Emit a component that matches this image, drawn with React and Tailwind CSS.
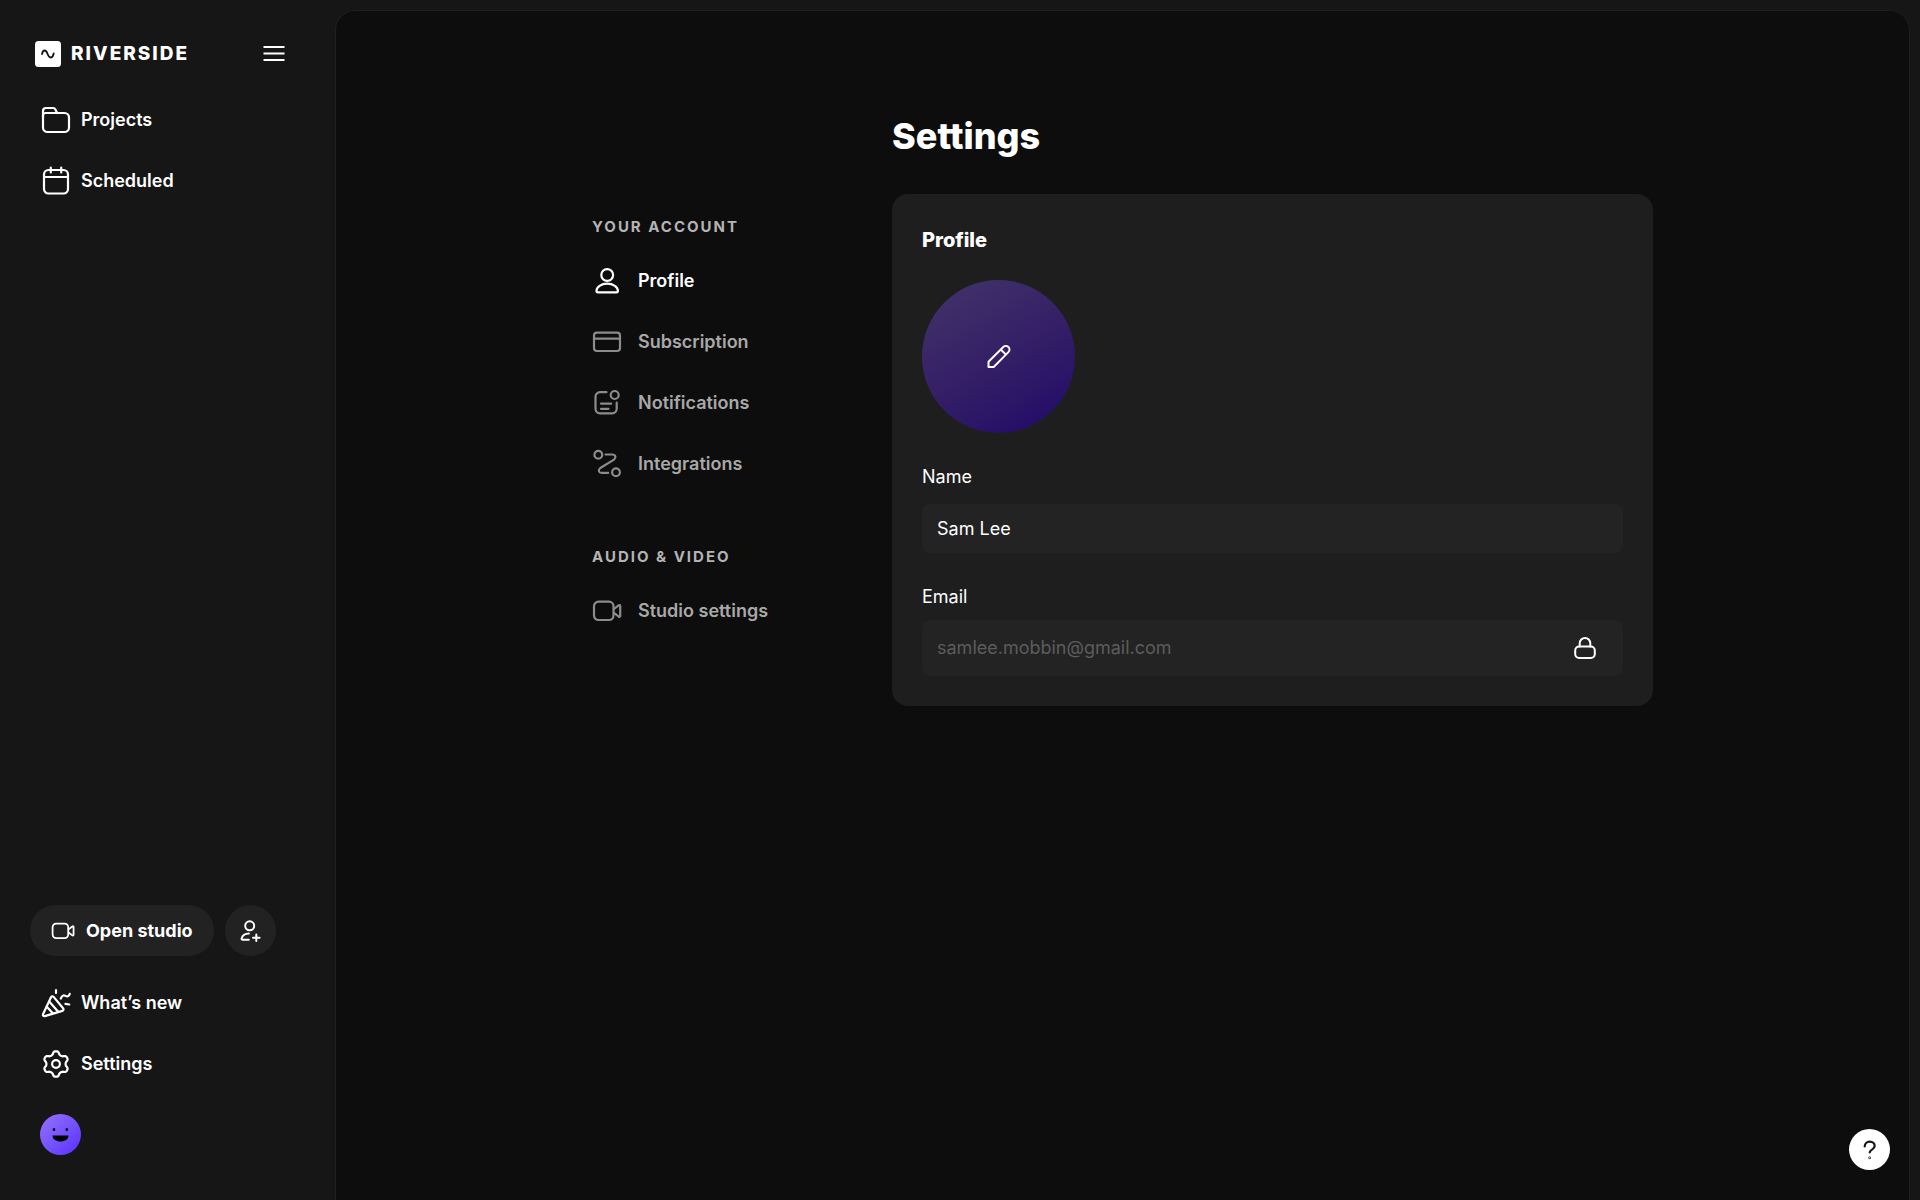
const Icon = ({ size = 'size-[30px]', box = 30, stroke = 2.2, children }) => (
  <svg
    viewBox={`0 0 ${box} ${box}`}
    className={`${size} shrink-0`}
    fill="none"
    stroke="currentColor"
    strokeWidth={stroke}
    strokeLinecap="round"
    strokeLinejoin="round"
    aria-hidden="true"
  >
    {children}
  </svg>
);

// Six soft teeth, one of them pointing straight up
const gearPath = (() => {
  const points = [];
  for (let deg = 0; deg < 360; deg += 4) {
    const a = (deg * Math.PI) / 180;
    const wave = Math.cos(6 * a);
    const r = 11.2 + 1.7 * Math.tanh(1.6 * wave);
    points.push(`${(15 + r * Math.sin(a)).toFixed(2)} ${(15 - r * Math.cos(a)).toFixed(2)}`);
  }
  return `M${points.join('L')}Z`;
})();

const FolderIcon = () => (
  <Icon>
    <path d="M2 12V6a3 3 0 0 1 3-3h7.2a2.5 2.5 0 0 1 2.2 1.400L16.200 8" />
    <path d="M2 11.500V22.500A4.500 4.500 0 0 0 6.500 27h17a4.500 4.500 0 0 0 4.500-4.500v-10A4.500 4.500 0 0 0 23.500 8H4.500C3 8 2 9 2 10.500Z" />
  </Icon>
);

const CalendarIcon = () => (
  <Icon>
    <rect x="3" y="4" width="24" height="23.500" rx="4.500" />
    <path d="M3 11h24M9.800 1.500v5M20.200 1.500v5" />
  </Icon>
);

const CameraIcon = ({ size }) => (
  <Icon size={size}>
    <rect x="2" y="5.700" width="19.500" height="18.300" rx="4.500" />
    <path d="M22 13l4.600-3.700c.8-.6 1.600-.2 1.600.8v9.600c0 1-.8 1.400-1.600.8L22 16.800" />
  </Icon>
);

const PersonIcon = () => (
  <Icon>
    <circle cx="15.200" cy="9" r="5.900" />
    <path d="M4.500 24.800c0-3.600 4.600-7.100 10.700-7.100s10.700 3.500 10.700 7.100c0 .9-.6 1.500-1.500 1.500H6c-.9 0-1.500-.6-1.500-1.500Z" />
  </Icon>
);

const CreditCardIcon = () => (
  <Icon>
    <rect x="2" y="5.700" width="26" height="18.300" rx="3" />
    <path d="M2 11.700h26" />
  </Icon>
);

const NotificationsIcon = () => (
  <Icon>
    <circle cx="22.700" cy="7" r="4" />
    <path d="M14.500 4.200H8A4.500 4.500 0 0 0 3.500 8.700v12.100a4.500 4.500 0 0 0 4.500 4.500h12.200a4.500 4.500 0 0 0 4.500-4.500v-6.300M9 15.600h10.200M9 20.800h7.500" />
  </Icon>
);

const IntegrationsIcon = () => (
  <Icon>
    <circle cx="6.300" cy="5.700" r="3.900" />
    <circle cx="24" cy="23.300" r="3.900" />
    <path d="M13.500 5.500h6.800c3.300 0 4.200 3.200 1.700 5.100L8.300 19c-2.600 2-1.700 4.900 1.500 4.900h6.400" />
  </Icon>
);

const PartyIcon = () => (
  <Icon>
    <path d="M10 9.200 2 26.300c-.5 1.200.5 2.200 1.800 1.800l17.500-5.200c1.300-.4 1.600-1.800.6-2.900L12.600 8.900c-.9-1-2.100-.8-2.600.3Z" />
    <path d="M8.200 13.500l9 10.200M5.800 18.800l6 6.400M15 2V5M19.800 10.500c1.500-4 3.500-3.300 4.700-2.600 1.700 1 3.500.8 4.200-2M24.500 15.900l3.700.6" />
  </Icon>
);

const GearIcon = () => (
  <Icon>
    <path d={gearPath} />
    <circle cx="15" cy="15" r="3.900" />
  </Icon>
);

const InviteIcon = () => (
  <Icon size="size-6" box={24} stroke={2}>
    <circle cx="11.700" cy="6.800" r="4.500" />
    <path d="M10.800 14.600c-4 .2-6.300 2.200-7.100 4.600-.3 1 .2 1.500 1.100 1.500h6M18.300 15.500v6.600M15 18.800h6.600" />
  </Icon>
);

const PencilIcon = () => (
  <Icon size="size-6" box={24} stroke={2}>
    <path d="M1.500 22v-5.200L16.300 2a3.600 3.600 0 0 1 5.100 5.100L6.700 22ZM13.800 4.500l5.100 5.100" />
  </Icon>
);

const LockIcon = () => (
  <Icon size="size-6" box={24} stroke={2}>
    <rect x="2.200" y="10.500" width="19.600" height="11.500" rx="4" />
    <path d="M6.700 10.500V7.300a5.300 5.300 0 0 1 10.600 0v3.200" />
  </Icon>
);

const mainLinks = [
  { label: 'Projects', icon: FolderIcon },
  { label: 'Scheduled', icon: CalendarIcon },
];

const footerLinks = [
  { label: 'What’s new', icon: PartyIcon },
  { label: 'Settings', icon: GearIcon },
];

const settingsGroups = [
  {
    title: 'YOUR ACCOUNT',
    links: [
      { label: 'Profile', icon: PersonIcon, active: true },
      { label: 'Subscription', icon: CreditCardIcon },
      { label: 'Notifications', icon: NotificationsIcon },
      { label: 'Integrations', icon: IntegrationsIcon },
    ],
  },
  {
    title: 'AUDIO & VIDEO',
    links: [{ label: 'Studio settings', icon: CameraIcon }],
  },
];

const SidebarLink = ({ label, icon: LinkIcon }) => (
  <a href="#" className="flex h-[61px] items-center gap-[10px] pl-[11px] text-lg font-semibold">
    <LinkIcon />
    {label}
  </a>
);

const Logo = () => (
  <a href="#" className="flex items-center gap-[10px]">
    <svg viewBox="0 0 26 26" className="size-[26px]" aria-hidden="true">
      <rect width="26" height="26" rx="3.500" fill="#fff" />
      <path
        d="M7 13.200c.4-2.300 1.400-3.700 2.700-3.700 3.300 0 2.500 7 5.900 7 1.500 0 2.600-1.500 3.100-4"
        fill="none"
        stroke="#161616"
        strokeWidth="1.800"
        strokeLinecap="round"
      />
    </svg>
    <span className="text-[19px] leading-6 font-extrabold tracking-[2px]">RIVERSIDE</span>
  </a>
);

const Sidebar = () => (
  <aside className="flex w-[335px] shrink-0 flex-col pt-6 pr-12 pb-[45px] pl-[30px]">
    <div className="mb-[5px] flex h-[60px] items-center justify-between pl-[5px]">
      <Logo />
      <button type="button" aria-label="Toggle menu" className="flex size-[26px] items-center justify-center">
        <svg viewBox="0 0 22 16" className="h-4 w-[22px]" stroke="currentColor" strokeWidth="2" aria-hidden="true">
          <path d="M.5 1h21M.5 7.500h21M.5 14h21" />
        </svg>
      </button>
    </div>
    <nav>
      {mainLinks.map(link => (
        <SidebarLink key={link.label} {...link} />
      ))}
    </nav>

    <div className="mt-auto">
      <div className="mb-4 flex gap-[11px]">
        <button
          type="button"
          className="flex h-[51px] items-center gap-[11px] rounded-full bg-[#222] px-[21px] text-lg font-bold"
        >
          <CameraIcon size="size-6" />
          Open studio
        </button>
        <button
          type="button"
          aria-label="Invite people"
          className="flex size-[51px] items-center justify-center rounded-full bg-[#222]"
        >
          <InviteIcon />
        </button>
      </div>
      {footerLinks.map(link => (
        <SidebarLink key={link.label} {...link} />
      ))}
      <button
        type="button"
        aria-label="Account"
        className="mt-5 ml-[10px] block size-[41px] rounded-full bg-linear-to-br from-[#9671ff] to-[#5a26ff]"
      >
        <svg viewBox="0 0 41 41" className="size-full" aria-hidden="true">
          <ellipse cx="14" cy="15.500" rx="1.300" ry="1.600" />
          <ellipse cx="26.800" cy="15.500" rx="1.300" ry="1.600" />
          <path d="M12.500 21.500h16c0 3.800-3.500 6-8 6s-8-2.200-8-6Z" />
        </svg>
      </button>
    </div>
  </aside>
);

const SettingsNav = () => (
  <nav className="flex w-[300px] shrink-0 flex-col gap-[51px] pt-[105px]">
    {settingsGroups.map(group => (
      <div key={group.title}>
        <h2 className="mb-[11px] text-[15px] leading-6 font-bold tracking-[2px] text-[#b4b4b4]">{group.title}</h2>
        {group.links.map(({ label, icon: LinkIcon, active }) => (
          <a
            key={label}
            href="#"
            className={`flex h-[61px] items-center gap-4 text-lg font-semibold ${active ? 'text-white' : 'text-[#a8a8a8]'}`}
          >
            <span className={active ? 'text-white' : 'text-[#8c8c8c]'}>
              <LinkIcon />
            </span>
            {label}
          </a>
        ))}
      </div>
    ))}
  </nav>
);

const ProfileCard = () => (
  <section className="rounded-2xl bg-[#1e1e1e] px-[30px] py-[30px]">
    <h2 className="text-xl leading-8 font-extrabold">Profile</h2>
    <button
      type="button"
      aria-label="Edit picture"
      className="mt-6 flex size-[153px] items-center justify-center rounded-full bg-linear-150 from-[#3f3069] from-10% via-[#351f66] to-[#260f68] to-85%"
    >
      <PencilIcon />
    </button>
    <label htmlFor="name" className="mt-8 block text-lg leading-6">
      Name
    </label>
    <input
      id="name"
      type="text"
      defaultValue="Sam Lee"
      className="mt-[15px] block h-[49px] w-full rounded-lg bg-[#232323] px-[15px] text-lg outline-none"
    />
    <label htmlFor="email" className="mt-8 block text-lg leading-6">
      Email
    </label>
    <div className="mt-[11px] flex h-14 items-center rounded-lg bg-[#232323] pr-[26px] pl-[15px]">
      <input
        id="email"
        type="email"
        readOnly
        defaultValue="samlee.mobbin@gmail.com"
        className="min-w-0 flex-1 bg-transparent text-lg text-[#5c5c5c] outline-none"
      />
      <LockIcon />
    </div>
  </section>
);

const App = () => {
  return (
    <div className="flex min-h-screen bg-[#161616] font-[Inter,sans-serif] text-white">
      <Sidebar />
      <main className="mt-[10px] mr-[10px] flex-1 rounded-t-[20px] border border-b-0 border-[#1f1f1f] bg-[#0d0d0d] px-8 pt-[99px]">
        <div className="mx-auto flex max-w-[1061px]">
          <SettingsNav />
          <div className="min-w-0 flex-1">
            <h1 className="mb-8 text-4xl leading-[52px] font-extrabold">Settings</h1>
            <ProfileCard />
          </div>
        </div>
      </main>
      <button
        type="button"
        aria-label="Help"
        className="fixed right-[30px] bottom-[30px] flex size-[41px] items-center justify-center rounded-full bg-white text-[#161616]"
      >
        <Icon size="size-5" box={20}>
          <path d="M4.700 6.500c0-3 2.200-4.900 5-4.900 3 0 5 2 5 4.500 0 3.700-4.800 3.300-5 6.300" />
          <circle cx="9.700" cy="17.800" r=".3" fill="currentColor" />
        </Icon>
      </button>
    </div>
  );
};

export default App;
